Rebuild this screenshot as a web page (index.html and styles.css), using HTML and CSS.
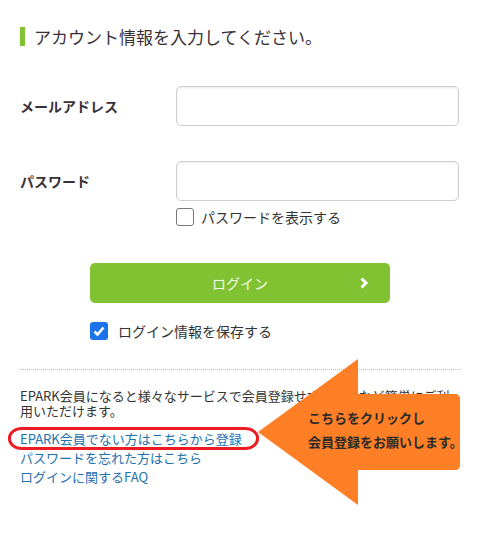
FILE: index.html
```html
<!DOCTYPE html>
<html lang="ja">

    <head>
        <meta charset="UTF-8">
        <meta name="viewport" content="width=device-width, initial-scale=1.0">
        <title>ログイン</title>
        <link rel="stylesheet" href="styles.css">
    </head>

    <body>
        <div class="page">
            <h2 class="ttl">アカウント情報を入力してください。</h2>

            <div class="row row-mail">
                <label class="lbl" for="mail">メールアドレス</label>
                <input id="mail" class="txt" type="text">
            </div>

            <div class="row row-pass">
                <label class="lbl" for="pass">パスワード</label>
                <input id="pass" class="txt" type="password">
            </div>
            <label class="chk chk-show">
                <span class="box"></span>
                <span>パスワードを表示する</span>
            </label>

            <button class="btn-login">
                <span>ログイン</span>
                <svg class="arr" width="10" height="12" viewBox="0 0 10 12">
                    <polyline points="2.5,1.5 7,6 2.5,10.5" fill="none" stroke="#fff" stroke-width="3" />
                </svg>
            </button>

            <label class="chk chk-save">
                <span class="box on">
                    <svg width="14" height="14" viewBox="0 0 14 14">
                        <polyline points="2.5,7.5 5.5,10.5 11.5,3.5" fill="none" stroke="#fff" stroke-width="2.6" />
                    </svg>
                </span>
                <span>ログイン情報を保存する</span>
            </label>

            <div class="line"></div>

            <p class="info">EPARK会員になると様々なサービスで会員登録せずに予約など簡単にご利用いただけます。</p>
            <ul class="links">
                <li><a href="#">EPARK会員でない方はこちらから登録</a></li>
                <li><a href="#">パスワードを忘れた方はこちら</a></li>
                <li><a href="#">ログインに関するFAQ</a></li>
            </ul>

            <!-- annotation -->
            <div class="mark"></div>
            <svg class="big-arrow" width="202" height="146" viewBox="0 0 202 146">
                <polygon points="0,73 100,0 100,35 199,35 202,38 202,108 199,111 100,111 100,146" fill="#ff7f27" />
            </svg>
            <div class="note">こちらをクリックし<br>会員登録をお願いします。</div>
        </div>
    </body>

</html>
```

FILE: styles.css
```css
body {
    margin: 0;
    padding: 0;
    font-family: "Noto Sans CJK JP", sans-serif;
    color: #333;
    background: #fff;
}

.page {
    position: relative;
    width: 440px;
    padding: 27px 17px 40px 20px;
}

.ttl {
    margin: 0;
    border-left: 5px solid #80c232;
    padding-left: 9px;
    font-size: 17px;
    font-weight: normal;
    line-height: 19px;
    color: #3a3038;
}

.row {
    display: flex;
    align-items: center;
}

.row-mail {
    margin-top: 40px;
}

.row-pass {
    margin-top: 35px;
}

.lbl {
    width: 156px;
    font-size: 14px;
    font-weight: bold;
    color: #3a3038;
}

.txt {
    box-sizing: border-box;
    width: 283px;
    height: 40px;
    border: 1px solid #cfcfcf;
    border-radius: 5px;
    box-shadow: inset 0 1px 2px rgba(0, 0, 0, 0.08);
    padding: 0 10px;
    font-size: 14px;
}

.chk {
    display: flex;
    align-items: center;
    gap: 7px;
    font-size: 14px;
    line-height: 18px;
    color: #333;
}

.box {
    box-sizing: border-box;
    width: 18px;
    height: 18px;
    border: 1px solid #777;
    border-radius: 3px;
    display: flex;
    align-items: center;
    justify-content: center;
}

.box.on {
    border: none;
    background-color: #1a73e8;
}

.chk-show {
    margin-top: 7px;
    margin-left: 156px;
}

.btn-login {
    position: relative;
    display: flex;
    align-items: center;
    justify-content: center;
    margin-top: 37px;
    margin-left: 70px;
    width: 300px;
    height: 40px;
    border: none;
    border-radius: 5px;
    background-color: #80c232;
    color: #f4fbe9;
    font-family: "Noto Sans CJK JP", sans-serif;
    font-size: 14px;
}

.btn-login .arr {
    position: absolute;
    right: 21px;
    top: 14px;
}

.chk-save {
    margin-top: 19px;
    margin-left: 70px;
    gap: 10px;
}

.line {
    margin-top: 29px;
    border-top: 1px dotted #bbb;
}

.info {
    margin: 18px 0 0;
    font-size: 13px;
    line-height: 15px;
    color: #333;
}

.links {
    list-style: none;
    margin: 11px 0 0;
    padding: 0;
    font-size: 13px;
    line-height: 19px;
}

.links a {
    color: #1d71b0;
    text-decoration: none;
}

.mark {
    position: absolute;
    left: 8px;
    top: 427px;
    box-sizing: border-box;
    width: 251px;
    height: 23px;
    border: 3px solid #ed1c24;
    border-radius: 14px / 11px;
}

.big-arrow {
    position: absolute;
    left: 258px;
    top: 359px;
}

.note {
    position: absolute;
    left: 308px;
    top: 406px;
    font-size: 13px;
    font-weight: bold;
    line-height: 24px;
    color: #2a2a2a;
    white-space: nowrap;
}
```
